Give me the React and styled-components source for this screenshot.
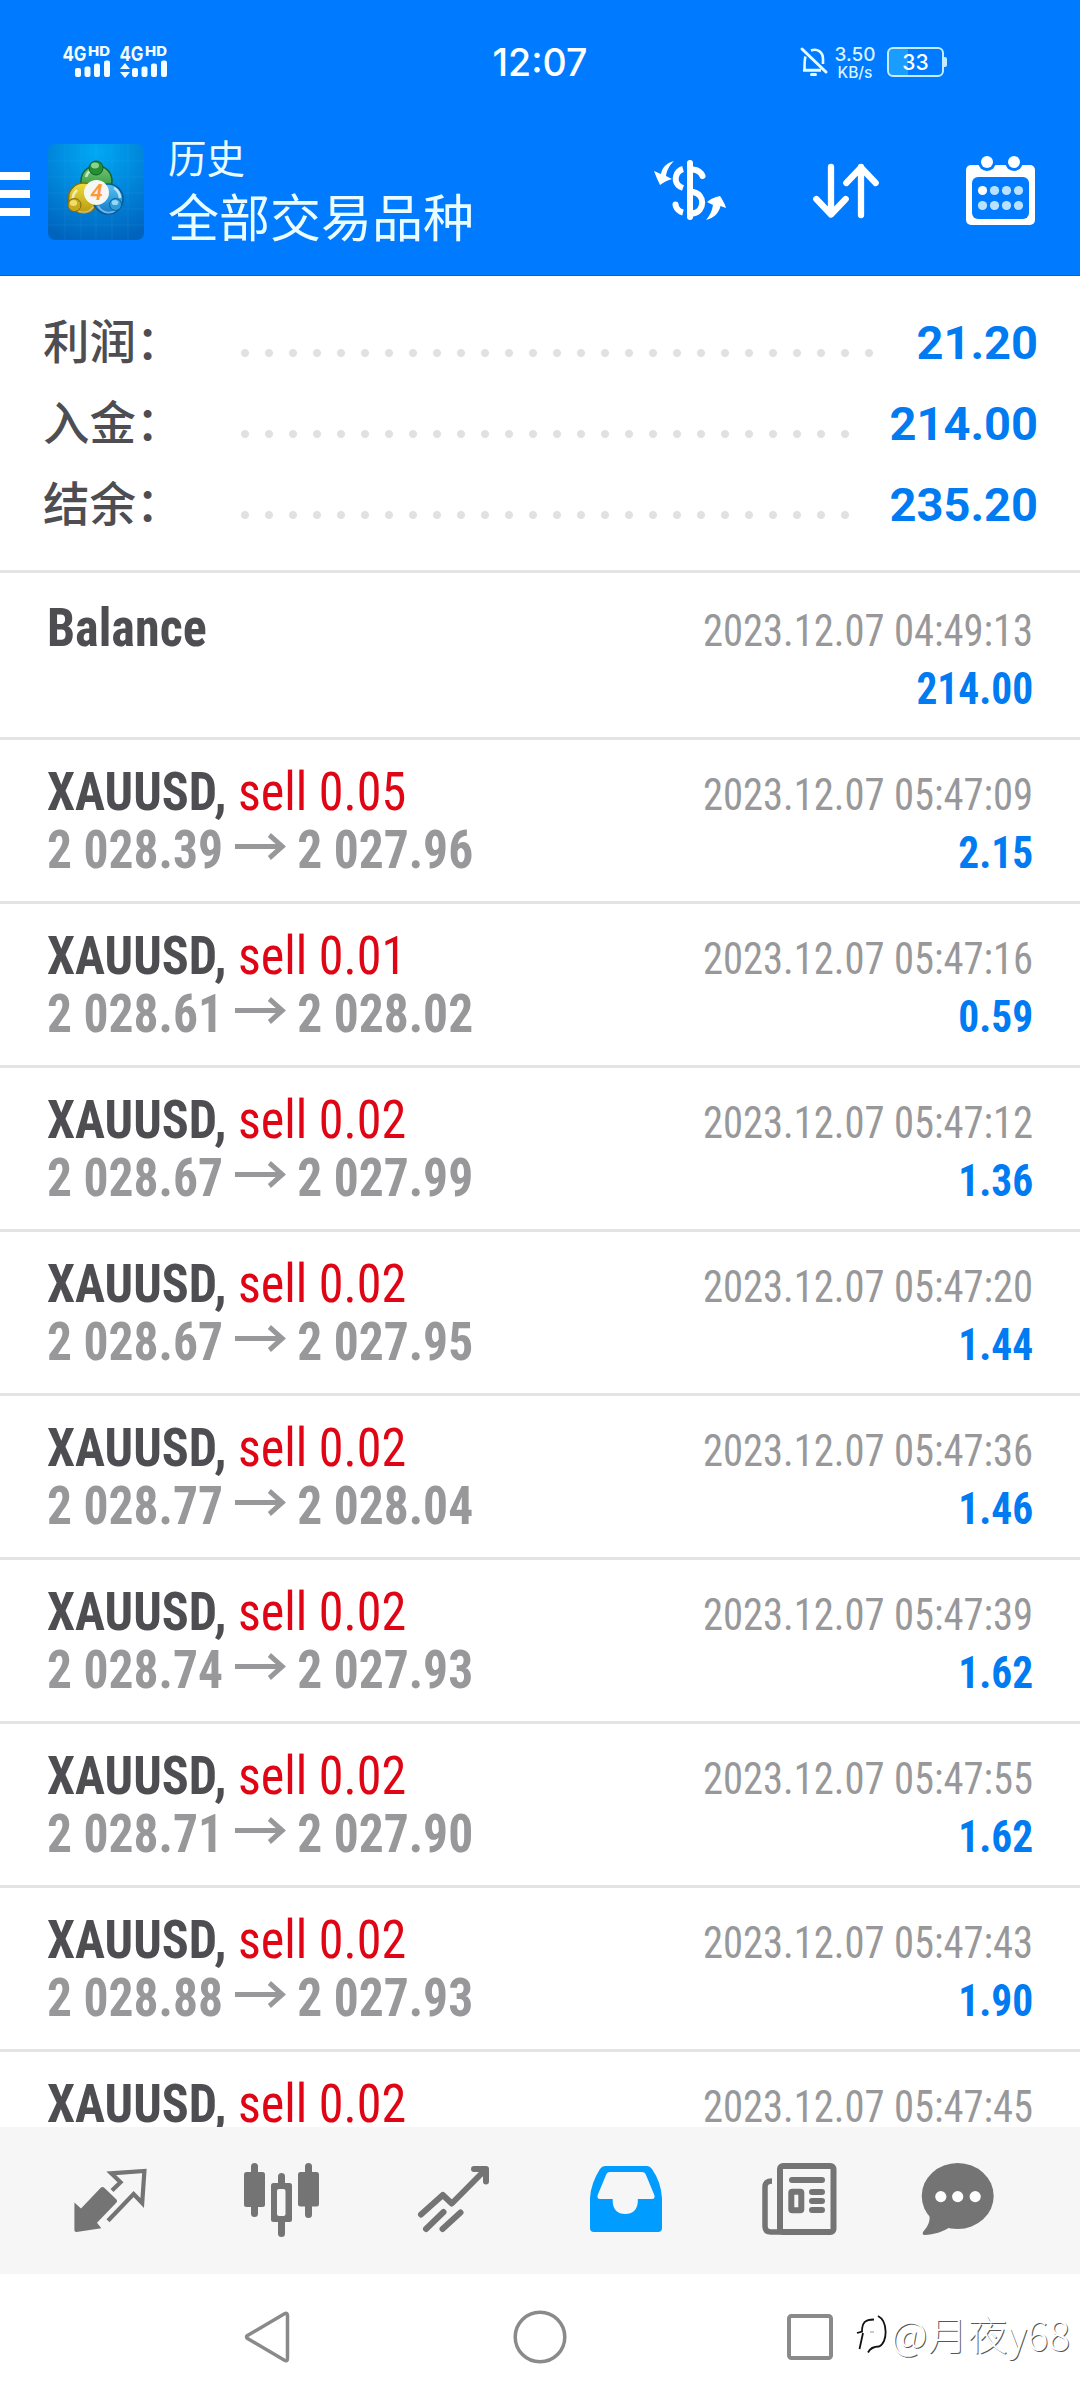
import React from 'react';
import styled, { createGlobalStyle } from 'styled-components';

const colors = {
  header: '#007bff',
  white: '#fff',
  darkText: '#4d4d52',
  grayText: '#98989a',
  profit: '#007bf2',
  sell: '#df0515',
  line: '#e4e4e4',
  dot: '#e1e1e1',
  tabBar: '#f6f6f6',
  tabIcon: '#747474',
  tabActive: '#009cff',
  navIcon: '#8a8a8a',
};

const GlobalStyle = createGlobalStyle`
  * { box-sizing: border-box; }
  body {
    margin: 0;
    background: ${colors.white};
    font-family: Roboto, 'Noto Sans CJK SC', sans-serif;
  }
  svg { display: block; flex: none; overflow: visible; }
`;

const Screen = styled.div`
  position: relative;
  display: flex;
  flex-direction: column;
  width: 1080px;
  height: 2400px;
  overflow: hidden;
`;

// --- Header --- //
const Header = styled.header`
  flex: none;
  height: 276px;
  background: ${colors.header};
  border-bottom: 1px solid #0a67c4;
  color: ${colors.white};
`;

const StatusBar = styled.div`
  display: grid;
  grid-template-columns: 1fr auto 1fr;
  align-items: center;
  height: 124px;
  padding: 0 133px 0 63px;
  font-family: Inter, sans-serif;
`;

const Signals = styled.div`
  display: flex;
  gap: 10px;
`;

const Clock = styled.div`
  font-size: 37.5px;
  font-weight: 500;
  margin-left: 70px;
`;

const StatusRight = styled.div`
  display: flex;
  justify-content: flex-end;
  align-items: center;
`;

const NetSpeed = styled.div`
  width: 42px;
  margin: 2px 11px 0 7px;
  text-align: center;
  font-weight: 500;
  color: #d9f4ff;
`;

const NetValue = styled.div`
  font-size: 19px;
  line-height: 18px;
`;

const NetUnit = styled.div`
  font-size: 15.5px;
  line-height: 17px;
`;

const Battery = styled.div`
  position: relative;
  width: 57px;
  height: 30px;
  border: 2px solid #c4ecff;
  border-radius: 6px;
  background: linear-gradient(90deg, #1b9cff 19px, transparent 19px);
  font-size: 21px;
  font-weight: 500;
  line-height: 27px;
  text-align: center;
  margin-right: 3px;

  &::after {
    content: '';
    position: absolute;
    right: -5px;
    top: 8px;
    width: 3px;
    height: 10px;
    border-radius: 0 2px 2px 0;
    background: #c4ecff;
  }
`;

const Toolbar = styled.div`
  display: flex;
  align-items: flex-start;
  padding: 20px 45px 0 0;
`;

const MenuButton = styled.div`
  display: flex;
  flex-direction: column;
  gap: 10px;
  width: 30px;
  margin: 28px 18px 0 0;

  span {
    height: 8px;
    background: ${colors.white};
  }
`;

const Titles = styled.div`
  flex: 1;
  margin: -15px 0 0 24px;
  font-family: 'Noto Sans CJK SC', sans-serif;
  font-weight: 400;
  color: #eafcff;
`;

const Subtitle = styled.div`
  font-size: 38.5px;
  line-height: 54px;
`;

const Title = styled.div`
  font-size: 51px;
  line-height: 65px;
`;

const Actions = styled.div`
  display: flex;
  gap: 87px;
  align-items: center;
  margin-top: 12px;
`;

// --- Summary --- //
const Summary = styled.section`
  flex: none;
  height: 297px;
  padding: 27px 42px 0 43px;
  border-bottom: 3px solid ${colors.line};
`;

const SummaryRow = styled.div`
  display: flex;
  height: 81px;
`;

const SummaryLabel = styled.div`
  width: 190px;
  font-size: 46.5px;
  line-height: 71px;
  font-weight: 500;
  font-family: 'Noto Sans CJK SC', sans-serif;
  color: ${colors.darkText};
`;

const Leader = styled.div`
  width: ${({ $count }) => $count * 24}px;
  height: 24px;
  margin-top: 38px;
  background: radial-gradient(circle at 12px 12px, ${colors.dot} 3.6px, transparent 4.4px) 0 0 / 24px 24px;
`;

const SummaryValue = styled.div`
  margin-left: auto;
  font-size: 47px;
  line-height: 79px;
  font-weight: 700;
  color: ${colors.profit};
`;

// --- Deals --- //
const DealList = styled.main`
  flex: 1;
  min-height: 0;
  overflow: hidden;
  padding-top: 3px;
`;

const Deal = styled.div`
  display: flex;
  justify-content: space-between;
  height: 164px;
  padding: 23px 47px 0 47px;
  border-bottom: 3px solid ${colors.line};
  font-family: 'Roboto Condensed', Roboto, sans-serif;
  line-height: 58px;
  white-space: nowrap;
`;

const DealMain = styled.div`
  font-size: 54px;
  font-weight: 700;
  color: ${colors.darkText};
`;

const DealInfo = styled.div`
  margin-top: 3px;
  text-align: right;
  font-size: 45px;
  color: ${colors.grayText};
`;

// The app's face is narrower than Roboto Condensed, so every line is squeezed a bit
const Name = styled.div`
  transform: scaleX(0.928);
  transform-origin: left;
`;

const Side = styled.span`
  font-weight: 400;
  color: ${colors.sell};
`;

const Prices = styled.div`
  display: flex;
  color: ${colors.grayText};
  transform: scaleX(0.917);
  transform-origin: left;

  svg { margin: 12px 12px 0 13px; }
`;

const Time = styled.div`
  transform: scaleX(0.902);
  transform-origin: right;
`;

const Profit = styled.div`
  font-weight: 700;
  color: ${colors.profit};
  transform: scaleX(0.92);
  transform-origin: right;
`;

// --- Bottom bars --- //
const TabBar = styled.nav`
  flex: none;
  display: flex;
  height: 147px;
  padding-left: 74px;
  background: ${colors.tabBar};
  color: ${colors.tabIcon};
`;

const Tab = styled.div`
  margin: ${({ $top }) => $top}px ${({ $after }) => $after}px 0 0;
  color: ${({ $active }) => ($active ? colors.tabActive : 'inherit')};
`;

const SystemNav = styled.div`
  flex: none;
  display: flex;
  align-items: center;
  height: 126px;
  padding-left: 245px;
  gap: 222px;
`;

const Watermark = styled.div`
  position: absolute;
  left: 856px;
  top: 2304px;
  display: flex;
  align-items: center;
  gap: 2px;
  font-family: 'Noto Sans CJK SC', sans-serif;
  font-size: 40px;
  line-height: 58px;
  font-weight: 300;
  color: ${colors.white};
  text-shadow: 1px 1px 0 rgba(0, 0, 0, 0.68);
`;

// --- Icons --- //
const SignalIcon = ({ data }) => (
  <svg width="47" height="34" viewBox="0 0 47 34" fill="#f2fdff">
    <text x="-0.5" y="16" fontSize="20" fontWeight="700" textLength="24" lengthAdjust="spacingAndGlyphs">4G</text>
    <text x="25" y="11" fontSize="13.5" fontWeight="800" textLength="22" lengthAdjust="spacingAndGlyphs">HD</text>
    {data && <path d="M5 18l5 6H0zM5 33l5-6H0z" />}
    <rect x="12" y="23" width="6" height="9" rx="2" />
    <rect x="21.500" y="21.500" width="6" height="10.500" rx="2" />
    <rect x="31" y="18.500" width="6" height="13.500" rx="2" />
    <rect x="41" y="15.500" width="6" height="16.500" rx="2" />
  </svg>
);

const BellOffIcon = () => (
  <svg width="26" height="30" viewBox="0 0 26 30" fill="none" stroke="#e6fbff" strokeWidth="2.600">
    <path d="M1 2l24 23" strokeWidth="3" strokeLinecap="round" />
    <path d="M4.500 9.500C3.600 12 3.500 15 3.500 23H20M2 23.500h18M10 3.500c6-2.500 12 1.500 12 8.500v5" />
    <path d="M10.500 27.500h4" strokeWidth="3" strokeLinecap="round" />
  </svg>
);

const AppLogo = () => (
  <svg width="96" height="96" viewBox="0 0 96 96">
    <defs>
      <radialGradient id="sky" cx="50%" cy="8%" r="95%">
        <stop offset="0" stopColor="#00a9f4" />
        <stop offset="0.5" stopColor="#0087dc" />
        <stop offset="1" stopColor="#0064bd" />
      </radialGradient>
      <linearGradient id="green" x2="0" y2="1">
        <stop offset="0" stopColor="#7cc576" />
        <stop offset="1" stopColor="#168a2c" />
      </linearGradient>
      <linearGradient id="yellow" x2="0" y2="1">
        <stop offset="0" stopColor="#eedd3c" />
        <stop offset="1" stopColor="#b99a10" />
      </linearGradient>
      <linearGradient id="blue" x2="0" y2="1">
        <stop offset="0" stopColor="#58c4f2" />
        <stop offset="1" stopColor="#1079c8" />
      </linearGradient>
    </defs>
    <rect width="96" height="96" rx="7" fill="url(#sky)" />
    <path d="M17 0v96M33 0v96M48 0v96M64 0v96M80 0v96M0 17h96M0 33h96M0 49h96M0 65h96M0 81h96" stroke="#4fb9ee" strokeOpacity="0.12" />
    <circle cx="48.500" cy="37" r="15.500" fill="url(#green)" stroke="#11662b" strokeWidth="1.500" />
    <circle cx="35.500" cy="54" r="15" fill="url(#yellow)" stroke="#826f12" strokeWidth="1.500" />
    <circle cx="60" cy="55" r="15" fill="url(#blue)" stroke="#075a94" strokeWidth="1.500" />
    <path d="M38 33c2-7 7-7 7-7M29 46c-5 5-4 9-4 9M72 54c0-7-6-10-6-10" stroke="#fff" strokeOpacity="0.65" strokeWidth="2.500" fill="none" />
    <path d="M28 66c6 4 14 3 17-3M50 62c5 8 13 8 18 4" stroke="#fff" strokeOpacity="0.4" strokeWidth="2" fill="none" />
    <circle cx="48" cy="24" r="7" fill="#258f36" stroke="#0d5f22" />
    <ellipse cx="47" cy="21.500" rx="4" ry="3" fill="#8fd08b" />
    <circle cx="26.500" cy="61" r="6.500" fill="#c9a91a" stroke="#806a0c" />
    <ellipse cx="25.500" cy="59" rx="3.600" ry="3" fill="#eedf6c" />
    <circle cx="67.500" cy="60.500" r="6" fill="#2f9bd8" stroke="#085f9c" />
    <ellipse cx="67" cy="58.500" rx="3.400" ry="2.600" fill="#92d8f6" />
    <circle cx="48.500" cy="48.500" r="12.500" fill="#f6f6f4" />
    <text x="48.500" y="56" textAnchor="middle" fontFamily="Roboto" fontStyle="italic" fontSize="22" fontWeight="600" fill="#ff9838">4</text>
  </svg>
);

const CurrencyIcon = () => (
  <svg width="72" height="61" viewBox="654 162 72 61" fill="none" stroke="#fff" strokeWidth="6" strokeLinecap="round">
    <path d="M690 165v54" />
    <path d="M693 171.500c5 .5 8 3 9.500 6.500M693 194c12 2 12.500 19 0 21.500" />
    <path d="M683 171c-7 2-9.500 11-5 16 1.500 1.600 3 2.300 5 3M683 214.500c-4-1-6-3-7.500-7" strokeLinecap="butt" />
    <path d="M675.500 206.500v.1" />
    <path d="M674 163c-5 5-7 9-8 15l6 3c-4 1-8 3-12 6-2-4-4-9-6-14l7 3c1-6 5-11 13-13zM706 222c8-2 13-7 14.500-14l5.500 2c-1-4-4-9-6-12-4 1-8 2-13 6l6 3c-1 6-3 10-7 15z" fill="#fff" strokeWidth="0" />
  </svg>
);

const SortIcon = () => (
  <svg width="66" height="54" viewBox="813 165 66 54" fill="none" stroke="#fff" strokeWidth="6.300" strokeLinecap="round" strokeLinejoin="round">
    <path d="M831 168v47M816.300 200L831 215.500 845.700 200M861 216v-48M846.300 184L861 168.500 875.700 184" />
  </svg>
);

const CalendarIcon = () => (
  <svg width="69" height="69" viewBox="0 0 69 69">
    <rect y="9" width="69" height="60" rx="5" fill="#fff" />
    <circle cx="21" cy="6" r="9" fill={colors.header} />
    <circle cx="48" cy="6" r="9" fill={colors.header} />
    <circle cx="21" cy="6" r="6" fill="#fff" />
    <circle cx="48" cy="6" r="6" fill="#fff" />
    <rect x="6" y="21" width="57" height="42" rx="6" fill={colors.header} />
    {[34.5, 49.5].map((y, row) => [16.5, 28.5, 40.5, 52.5].map((x, col) => (
      <circle key={x} cx={x} cy={y} r="4.600" fill={row + col === 0 ? '#fff' : '#b8e2ff'} />
    )))}
  </svg>
);

const ArrowIcon = () => (
  <svg width="56" height="27" viewBox="0 0 56 27" fill="none" stroke="currentColor" strokeWidth="5.200">
    <path d="M0 13.500h51M37.500 2l14 11.500-14 11.500" />
  </svg>
);

const QuotesIcon = () => (
  <svg width="72" height="63" viewBox="0 0 72 63" fill="currentColor">
    <path d="M.4 33.500L7 39.500 26.500 19q2-2 4 0L42 30q2 2 0 4L23 53.700l4.300 5.500L2.500 63Q0 63 .4 60z" />
    <path d="M38 21.500l8.500-8.200-9.300-9L70.400 2l-2.200 32-8.600-9L34 51.700" fill="none" stroke="currentColor" strokeWidth="4.200" />
  </svg>
);

const ChartIcon = () => (
  <svg width="75" height="74" viewBox="0 0 75 74" fill="currentColor">
    <rect x="7" y="0" width="7" height="54" rx="3.500" />
    <rect x="0" y="9" width="21" height="35" rx="2.500" />
    <rect x="34" y="10" width="7" height="64" rx="3.500" />
    <rect x="27" y="20" width="21" height="39" rx="2.500" />
    <rect x="33" y="26" width="8.500" height="27" rx="2" fill={colors.tabBar} />
    <rect x="61" y="0" width="7" height="55" rx="3.500" />
    <rect x="54" y="9" width="21" height="34.500" rx="2.500" />
  </svg>
);

const TradeIcon = () => (
  <svg width="71" height="66" viewBox="0 0 71 66" fill="none" stroke="currentColor" strokeWidth="6" strokeLinecap="round" strokeLinejoin="round">
    <path d="M3 48.500L24.800 29l9 8.500L67 4M8 63l17.500-17M24.500 63l18-16.500" />
    <path d="M56 3h12v12.500" />
  </svg>
);

const HistoryIcon = () => (
  <svg width="72" height="66" viewBox="0 0 72 66" fill="currentColor" fillRule="evenodd">
    <path d="M15 0h42q3 0 5 3 9 13 10 29v30q0 4-4 4H4q-4 0-4-4V32Q1 17 10 3q2-3 5-3zM20 6q-3 0-4 3L7.500 29.500Q7 33 10 33h12.700v3q1 12 12.500 12t12.600-12v-3H62q3 0 2.500-3.500L56 9q-1-3-4-3z" />
  </svg>
);

const NewsIcon = () => (
  <svg width="75" height="72" viewBox="0 0 75 72" fill="none" stroke="currentColor" strokeWidth="6">
    <rect x="18" y="3" width="53.500" height="66" rx="3" />
    <path d="M10 18q-7 0-7 6v39q0 6 6 6h12" strokeWidth="5.500" />
    <path d="M30 17h30M50 29h10M50 38h10M50 47h10" strokeLinecap="round" />
    <rect x="29.300" y="28.800" width="10" height="18.500" rx="1" />
  </svg>
);

const ChatIcon = () => (
  <svg width="73" height="72" viewBox="0 0 73 72" fill="currentColor">
    <ellipse cx="36.700" cy="33" rx="36" ry="33" />
    <path d="M8 50c2 8-1 13-6 19q-1 3 1.500 3C13 71.500 22 69 29 64z" />
    <circle cx="19.800" cy="33.600" r="5.600" fill="#fff" />
    <circle cx="36.700" cy="33.600" r="5.600" fill="#fff" />
    <circle cx="54.200" cy="33.600" r="5.600" fill="#fff" />
  </svg>
);

const BackIcon = () => (
  <svg width="46" height="52" viewBox="0 0 46 52" fill="none" stroke={colors.navIcon} strokeWidth="3.500" strokeLinejoin="round">
    <path d="M2.500 24.500L39.500 2.800q3-1.500 3 2v42.400q0 3.500-3 2L2.500 27.500q-2-1.500 0-3z" />
  </svg>
);

const HomeIcon = () => (
  <svg width="52" height="52" viewBox="0 0 52 52" fill="none" stroke={colors.navIcon} strokeWidth="3.500">
    <circle cx="27" cy="26" r="24.800" />
  </svg>
);

const RecentsIcon = () => (
  <svg width="46" height="46" viewBox="0 0 46 46" fill="none" stroke={colors.navIcon} strokeWidth="4">
    <rect x="2" y="2" width="42" height="42" rx="2.500" />
  </svg>
);

const WatermarkLogo = () => (
  <svg width="33" height="42" viewBox="0 0 33 42" fill="none" stroke="#111" strokeWidth="1.800">
    <path d="M3.500 37L7 21M1 21l5-1.500c0-9 3-12 12-12" />
    <path d="M22 4c10 5 10 27 1 30.500-5 0-9 2-11 6" />
    <path d="M14 20h4" strokeWidth="1" stroke="#999" />
  </svg>
);

// --- Data --- //
const summary = [
  { label: '利润：', value: '21.20', dots: 27 },
  { label: '入金：', value: '214.00', dots: 26 },
  { label: '结余：', value: '235.20', dots: 26 },
];

const deals = [
  { symbol: 'Balance', time: '04:49:13', profit: '214.00' },
  { symbol: 'XAUUSD', lot: '0.05', open: '2 028.39', close: '2 027.96', time: '05:47:09', profit: '2.15' },
  { symbol: 'XAUUSD', lot: '0.01', open: '2 028.61', close: '2 028.02', time: '05:47:16', profit: '0.59' },
  { symbol: 'XAUUSD', lot: '0.02', open: '2 028.67', close: '2 027.99', time: '05:47:12', profit: '1.36' },
  { symbol: 'XAUUSD', lot: '0.02', open: '2 028.67', close: '2 027.95', time: '05:47:20', profit: '1.44' },
  { symbol: 'XAUUSD', lot: '0.02', open: '2 028.77', close: '2 028.04', time: '05:47:36', profit: '1.46' },
  { symbol: 'XAUUSD', lot: '0.02', open: '2 028.74', close: '2 027.93', time: '05:47:39', profit: '1.62' },
  { symbol: 'XAUUSD', lot: '0.02', open: '2 028.71', close: '2 027.90', time: '05:47:55', profit: '1.62' },
  { symbol: 'XAUUSD', lot: '0.02', open: '2 028.88', close: '2 027.93', time: '05:47:43', profit: '1.90' },
  { symbol: 'XAUUSD', lot: '0.02', time: '05:47:45' },
];

export default function App() {
  return (
    <Screen>
      <GlobalStyle />
      <Header>
        <StatusBar>
          <Signals>
            <SignalIcon />
            <SignalIcon data />
          </Signals>
          <Clock>12:07</Clock>
          <StatusRight>
            <BellOffIcon />
            <NetSpeed>
              <NetValue>3.50</NetValue>
              <NetUnit>KB/s</NetUnit>
            </NetSpeed>
            <Battery>33</Battery>
          </StatusRight>
        </StatusBar>
        <Toolbar>
          <MenuButton>
            <span />
            <span />
            <span />
          </MenuButton>
          <AppLogo />
          <Titles>
            <Subtitle>历史</Subtitle>
            <Title>全部交易品种</Title>
          </Titles>
          <Actions>
            <CurrencyIcon />
            <SortIcon />
            <CalendarIcon />
          </Actions>
        </Toolbar>
      </Header>

      <Summary>
        {summary.map(({ label, value, dots }) => (
          <SummaryRow key={label}>
            <SummaryLabel>{label}</SummaryLabel>
            <Leader $count={dots} />
            <SummaryValue>{value}</SummaryValue>
          </SummaryRow>
        ))}
      </Summary>

      <DealList>
        {deals.map(({ symbol, lot, open, close, time, profit }) => (
          <Deal key={time}>
            <DealMain>
              <Name>
                {symbol}{lot && ', '}
                {lot && <Side>sell {lot}</Side>}
              </Name>
              {open && (
                <Prices>
                  {open}
                  <ArrowIcon />
                  {close}
                </Prices>
              )}
            </DealMain>
            <DealInfo>
              <Time>2023.12.07 {time}</Time>
              <Profit>{profit}</Profit>
            </DealInfo>
          </Deal>
        ))}
      </DealList>

      <TabBar>
        <Tab $top={42} $after={98}><QuotesIcon /></Tab>
        <Tab $top={36} $after={99}><ChartIcon /></Tab>
        <Tab $top={39} $after={101}><TradeIcon /></Tab>
        <Tab $top={39} $after={100} $active><HistoryIcon /></Tab>
        <Tab $top={36} $after={84}><NewsIcon /></Tab>
        <Tab $top={36} $after={0}><ChatIcon /></Tab>
      </TabBar>

      <SystemNav>
        <BackIcon />
        <HomeIcon />
        <RecentsIcon />
      </SystemNav>

      <Watermark>
        <WatermarkLogo />
        @月夜y68
      </Watermark>
    </Screen>
  );
}
